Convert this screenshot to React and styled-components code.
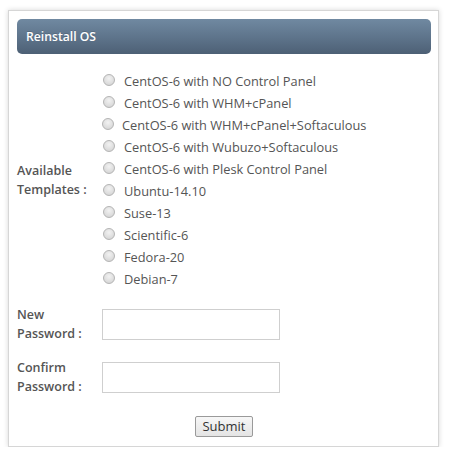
import React from "react";
import styled, { createGlobalStyle } from "styled-components";

const Global = createGlobalStyle`
  html, body { margin: 0; padding: 0; background: #fff; }
  body { padding: 10px 8px 0 8px; font-family: "Open Sans", "DejaVu Sans", sans-serif; }
  * { box-sizing: border-box; }
`;

const Card = styled.div`
  width: 431px;
  background: #fff;
  border: 1px solid #d6d6d6;
  box-shadow: 0 0 5px rgba(0, 0, 0, 0.16);
  padding: 8px 7px 9px 8px;
`;

const Header = styled.div`
  height: 35px;
  border-radius: 5px;
  background: linear-gradient(to bottom, #7089a1 0%, #5d738a 55%, #4d6075 100%);
  color: #fff;
  font-size: 12.2px;
  font-weight: 600;
  display: flex;
  align-items: center;
  padding-left: 9px;
  text-shadow: 0 -1px 0 rgba(0, 0, 0, 0.15);
`;

const Form = styled.form`
  margin-top: 16px;
  display: grid;
  grid-template-columns: 85px 1fr;
  row-gap: 15px;
  align-items: center;
`;

const Label = styled.div`
  font-size: 12.5px;
  font-weight: 600;
  color: #555;
  line-height: 19px;
`;

const Options = styled.div`
  display: flex;
  flex-direction: column;
`;

const Option = styled.label`
  height: 22px;
  display: flex;
  align-items: center;
  gap: ${(p) => (p.$tight ? "8px" : "9px")};
  margin-left: ${(p) => (p.$tight ? "0px" : "1px")};
  font-size: 12.8px;
  color: #555;
  white-space: nowrap;
`;

const Radio = styled.input.attrs({ type: "radio" })`
  appearance: none;
  -webkit-appearance: none;
  margin: 0;
  width: 12px;
  height: 12px;
  border-radius: 50%;
  border: 1px solid #b4b4b4;
  background: radial-gradient(circle at 50% 35%, #f2f2f2 0%, #dadada 70%, #cdcdcd 100%);
  flex: none;
  position: relative;
  top: -1px;
`;

const TextInput = styled.input`
  width: 178px;
  height: 31px;
  border: 1px solid #cfcfcf;
  background: #fff;
  margin: 0;
  font-family: inherit;
`;

const Actions = styled.div`
  display: flex;
  justify-content: center;
  margin-top: 20px;
`;

const Button = styled.button`
  height: 21px;
  width: 58px;
  padding: 0;
  font-family: "Open Sans", "DejaVu Sans", sans-serif;
  font-size: 13px;
  color: #333;
  border: 1px solid #9a9a9a;
  border-radius: 2px;
  background: linear-gradient(to bottom, #f7f7f7 0%, #e4e4e4 100%);
  line-height: 19px;
`;

const templates = [
  "CentOS-6 with NO Control Panel",
  "CentOS-6 with WHM+cPanel",
  "CentOS-6 with WHM+cPanel+Softaculous",
  "CentOS-6 with Wubuzo+Softaculous",
  "CentOS-6 with Plesk Control Panel",
  "Ubuntu-14.10",
  "Suse-13",
  "Scientific-6",
  "Fedora-20",
  "Debian-7",
];

export default function App() {
  return (
    <>
      <Global />
      <Card>
        <Header>Reinstall OS</Header>
        <Form onSubmit={(e) => e.preventDefault()}>
          <Label>
            Available
            <br />
            Templates :
          </Label>
          <Options>
            {templates.map((t, i) => (
              <Option key={t} $tight={i === 2}>
                <Radio name="tpl" />
                {t}
              </Option>
            ))}
          </Options>
          <Label>
            New
            <br />
            Password :
          </Label>
          <div>
            <TextInput type="password" />
          </div>
          <Label>
            Confirm
            <br />
            Password :
          </Label>
          <div>
            <TextInput type="password" />
          </div>
        </Form>
        <Actions>
          <Button type="submit">Submit</Button>
        </Actions>
      </Card>
    </>
  );
}
